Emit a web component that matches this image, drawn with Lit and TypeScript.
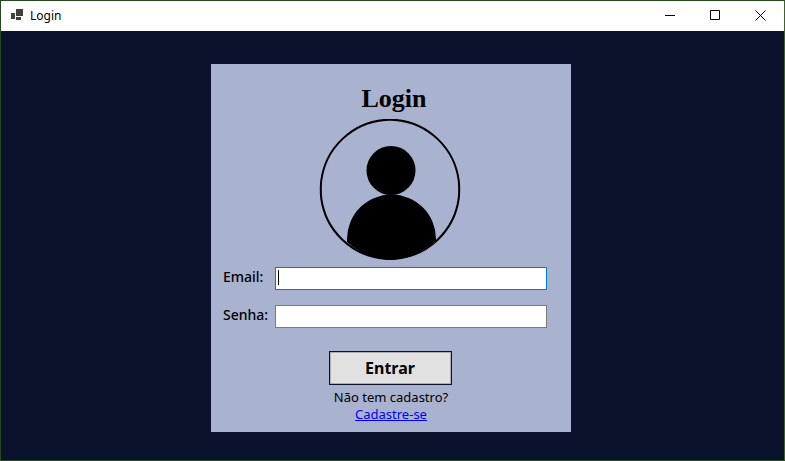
import { LitElement, html, css } from "lit";
import { customElement } from "lit/decorators.js";

@customElement("login-panel")
class LoginPanel extends LitElement {
  static styles = css`
    :host {
      display: block;
      box-sizing: border-box;
      width: 360px;
      max-width: 100%;
      padding: 20px 24px 9px 12px;
      background: #a9b2cf;
      color: #000;
      font-family: "Noto Sans", "Open Sans", sans-serif;
    }
    form {
      display: flex;
      flex-direction: column;
      align-items: center;
    }
    .heading {
      margin: 0;
      padding-left: 18px;
      font: bold 26px/30px "Liberation Serif", serif;
    }
    .avatar {
      display: block;
      margin: 5px 0 6px 10px;
    }
    .field {
      display: grid;
      grid-template-columns: 52px 1fr;
      width: 100%;
      margin-bottom: 15px;
    }
    label {
      font-size: 14px;
      font-weight: 500;
      line-height: 20px;
      white-space: nowrap;
    }
    input {
      box-sizing: border-box;
      width: 100%;
      height: 23px;
      padding: 0 3px;
      border: 1px solid #7a7a7a;
      border-radius: 0;
      outline: none;
      background: #fff;
      font: 14px "Noto Sans", sans-serif;
    }
    .active {
      border-color: #0078d7;
      background: linear-gradient(#000, #000) 2px 2px / 1px 15px no-repeat #fff;
      caret-color: transparent;
    }
    .enter {
      box-sizing: border-box;
      width: 123px;
      height: 34px;
      margin: 8px 0 4px 10px;
      padding: 0;
      border: 1px solid #0a132b;
      border-radius: 0;
      background: #e1e1e1;
      box-shadow: inset 0 0 0 1px #adadad;
      color: #000;
      font: bold 16px "Noto Sans", sans-serif;
    }
    .signup {
      margin: 0;
      padding-left: 12px;
      font-size: 13px;
      line-height: 17px;
      text-align: center;
    }
    .signup a {
      display: block;
      color: #00f;
    }
  `;

  render() {
    return html`
      <form @submit=${(e: Event) => e.preventDefault()}>
        <h1 class="heading">Login</h1>
        <svg class="avatar" width="142" height="142" viewBox="0 0 142 142" aria-hidden="true">
          <path
            d="M66 .900Q71 .500 76 .900A70 70 0 0 1 139.800 62Q140.600 70 139.800 79A70 70 0 0 1 76 139.800Q71 140.300 66 139.800A70 70 0 0 1 2.200 79Q1.400 70 2.200 62A70 70 0 0 1 66 .900Z"
            fill="none" stroke="#000" stroke-width="2" />
          <circle cx="72" cy="51.500" r="24.500" />
          <path d="M28 123V120A44.500 44.500 0 0 1 117 120V122A70 70 0 0 1 76 140.500H66A70 70 0 0 1 28 123Z" />
        </svg>
        <div class="field">
          <label for="email">Email:</label>
          <input id="email" class="active" type="email" autocomplete="off" />
        </div>
        <div class="field">
          <label for="senha">Senha:</label>
          <input id="senha" type="password" />
        </div>
        <button class="enter" type="submit">Entrar</button>
        <p class="signup">Não tem cadastro? <a href="#cadastro">Cadastre-se</a></p>
      </form>
    `;
  }
}

@customElement("app-root")
class AppRoot extends LitElement {
  static styles = css`
    :host {
      display: flex;
      flex-direction: column;
      box-sizing: border-box;
      min-height: 100vh;
      border: 1px solid #24491f;
      border-right-color: #3a6420;
      background: #0a132b;
    }
    .titlebar {
      display: flex;
      align-items: center;
      height: 30px;
      padding: 0 1px 0 10px;
      background: #fff;
      color: #000;
      font: 12px/16px "Noto Sans", sans-serif;
    }
    .title {
      flex: 1;
      padding-left: 7px;
    }
    .control {
      display: grid;
      place-items: center;
      width: 45px;
      height: 30px;
      padding: 0 0 1px;
      border: 0;
      background: none;
    }
    svg {
      display: block;
    }
    main {
      display: flex;
      flex: 1;
      justify-content: center;
      align-items: flex-start;
      padding: 33px 3px 28px 0;
    }
  `;

  render() {
    return html`
      <header class="titlebar">
        <svg width="12" height="14" viewBox="0 0 12 14" fill="#404040" aria-hidden="true">
          <path d="M5 0h7v7H5zM0 4h4v6H0zM5 8h5v3H5z" />
        </svg>
        <span class="title">Login</span>
        <button class="control" aria-label="Minimizar">
          <svg width="11" height="11" viewBox="0 0 11 11"><path d="M0 5h10v1H0z" /></svg>
        </button>
        <button class="control" aria-label="Maximizar">
          <svg width="11" height="11" viewBox="0 0 11 11"><path d="M.5.5h9v9h-9z" fill="none" stroke="#000" /></svg>
        </button>
        <button class="control" aria-label="Fechar">
          <svg width="11" height="11" viewBox="0 0 11 11"><path d="M.5.5l10 10M10.500.5l-10 10" stroke="#000" /></svg>
        </button>
      </header>
      <main><login-panel></login-panel></main>
    `;
  }
}
